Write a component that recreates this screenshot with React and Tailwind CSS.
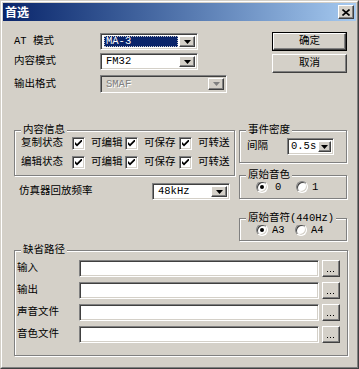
import React from "react";

const sunken =
  "border border-t-[#808080] border-l-[#808080] border-b-white border-r-white shadow-[inset_1px_1px_0_#404040,inset_-1px_-1px_0_#d4d0c8]";
const raised =
  "border border-t-white border-l-white border-b-[#404040] border-r-[#404040] shadow-[inset_-1px_-1px_0_#808080,inset_1px_1px_0_#d4d0c8]";
const etched =
  "relative border border-[#808080] shadow-[inset_1px_1px_0_#fff,1px_1px_0_#fff]";

function Arrow({ disabled }) {
  return (
    <svg width="7" height="4" viewBox="0 0 7 4">
      <polygon points="0,0 7,0 3.5,4" fill={disabled ? "#808080" : "#000"} />
    </svg>
  );
}

function Combo({ value, w, h, selected, disabled, tight, aw = "w-[16px]" }) {
  return (
    <div
      className={`${sunken} ${w} ${h} flex items-stretch p-[2px] ${
        disabled ? "bg-[#d4d0c8]" : "bg-white"
      }`}
    >
      <div className={`flex-1 flex items-center min-w-0 ${tight ? "" : "pl-[1px] pr-[1px]"}`}>
        {selected ? (
          <div className="h-full w-full bg-[#0a246a] text-white flex items-center pl-[1px] border border-dotted border-[#c8c8c8] leading-none">
            {value}
          </div>
        ) : disabled ? (
          <span className="pl-[2px] text-[#808080] [text-shadow:1px_1px_0_#fff] leading-none">
            {value}
          </span>
        ) : (
          <span className={`${tight ? "pl-[1px]" : "pl-[2px]"} leading-none whitespace-nowrap`}>{value}</span>
        )}
      </div>
      <div className={`${raised} ${aw} shrink-0 bg-[#d4d0c8] flex items-center justify-center`}>
        <Arrow disabled={disabled} />
      </div>
    </div>
  );
}

function Check() {
  return (
    <div className={`${sunken} w-[13px] h-[13px] bg-white flex items-center justify-center shrink-0`}>
      <svg width="7" height="7" viewBox="0 0 7 7">
        <path d="M0 2 L2 4 L7 -1 L7 1.5 L2 6.5 L0 4.5 Z" fill="#000" />
      </svg>
    </div>
  );
}

function Radio({ on }) {
  return (
    <div className="w-[12px] h-[12px] rounded-full bg-white border border-t-[#808080] border-l-[#808080] border-b-white border-r-white shadow-[inset_1px_1px_0_#404040,inset_-1px_-1px_0_#d4d0c8] flex items-center justify-center shrink-0">
      {on ? <div className="w-[4px] h-[4px] rounded-full bg-black" /> : null}
    </div>
  );
}

function Legend({ children }) {
  return (
    <span className="absolute -top-[8px] left-[6px] bg-[#d4d0c8] px-[2px] leading-[14px] whitespace-nowrap">
      {children}
    </span>
  );
}

function CheckItem({ label, w }) {
  return (
    <div className={`flex items-center ${w}`}>
      <Check />
      <span className="ml-[6px] leading-none whitespace-nowrap">{label}</span>
    </div>
  );
}

function PathRow({ label, first }) {
  return (
    <div className={`flex items-center h-[17px] ${first ? "" : "mt-[5px]"}`}>
      <span className="w-[62px] leading-none">{label}</span>
      <div className={`${sunken} w-[240px] h-[17px] bg-white`} />
      <div className={`${raised} ml-[3px] w-[18px] h-[17px] bg-[#d4d0c8] flex items-end justify-center pb-[3px]`}>
        <svg width="8" height="2" viewBox="0 0 8 2">
          <rect x="0" y="0" width="1" height="1" fill="#000" />
          <rect x="3" y="0" width="1" height="1" fill="#000" />
          <rect x="6" y="0" width="1" height="1" fill="#000" />
        </svg>
      </div>
    </div>
  );
}

export default function App() {
  return (
    <div className="w-[359px] h-[369px] bg-[#d4d0c8] text-black text-[10.5px] font-['Liberation_Mono','Noto_Sans_CJK_SC',monospace]">
      <div className="h-full border border-t-[#d4d0c8] border-l-[#d4d0c8] border-b-[#404040] border-r-[#404040]">
        <div className="h-full border border-t-white border-l-white border-b-[#808080] border-r-[#808080] p-[1px] flex flex-col">
          {/* Title bar */}
          <div className="h-[18px] shrink-0 flex items-center justify-between bg-gradient-to-r from-[#0a246a] to-[#a6caf0] pl-[2px] pr-[2px]">
            <span className="text-white font-bold text-[12px] leading-none font-['Noto_Sans_CJK_SC',sans-serif]">
              首选
            </span>
            <div className={`${raised} w-[16px] h-[14px] bg-[#d4d0c8] flex items-center justify-center`}>
              <svg width="8" height="7" viewBox="0 0 8 7">
                <path d="M0.5 0.5 L7.5 6.5 M7.5 0.5 L0.5 6.5" stroke="#000" strokeWidth="1.6" />
              </svg>
            </div>
          </div>

          {/* Body */}
          <div className="flex-1 pl-[11px] pt-[11px]">
            {/* Section A */}
            <div className="flex">
              <div className="w-[258px] pt-[1px]">
                <div className="flex items-center h-[17px]">
                  <span className="w-[86px] leading-none">AT 模式</span>
                  <Combo value="MA-3" w="w-[98px]" h="h-[17px]" selected />
                </div>
                <div className="flex items-center h-[17px] mt-[3px]">
                  <span className="w-[86px] leading-none">内容模式</span>
                  <Combo value="FM32" w="w-[98px]" h="h-[17px]" />
                </div>
                <div className="flex items-center h-[18px] mt-[5px]">
                  <span className="w-[86px] leading-none">输出格式</span>
                  <Combo value="SMAF" w="w-[127px]" h="h-[18px]" disabled />
                </div>
              </div>
              <div className="w-[75px]">
                <div className="border border-black">
                  <div className={`${raised} h-[17px] flex items-center justify-center leading-none`}>
                    确定
                  </div>
                </div>
                <div className={`${raised} mt-[3px] h-[19px] flex items-center justify-center leading-none`}>
                  取消
                </div>
              </div>
            </div>

            {/* Section B */}
            <div className="flex mt-[37px]">
              <div className="w-[221px]">
                <div className={`${etched} h-[46px] pt-[5px] pl-[6px]`}>
                  <Legend>内容信息</Legend>
                  <div className="flex items-center h-[14px]">
                    <span className="w-[51px] leading-none">复制状态</span>
                    <CheckItem label="可编辑" w="w-[53px]" />
                    <CheckItem label="可保存" w="w-[54px]" />
                    <CheckItem label="可转送" w="" />
                  </div>
                  <div className="flex items-center h-[14px] mt-[5px]">
                    <span className="w-[51px] leading-none">编辑状态</span>
                    <CheckItem label="可编辑" w="w-[53px]" />
                    <CheckItem label="可保存" w="w-[54px]" />
                    <CheckItem label="可转送" w="" />
                  </div>
                </div>
                <div className="flex items-center mt-[7px] h-[17px] pl-[5px]">
                  <span className="w-[133px] leading-none">仿真器回放频率</span>
                  <Combo value="48kHz" w="w-[78px]" h="h-[17px]" />
                </div>
              </div>

              <div className="w-[108px] ml-[4px]">
                <div className={`${etched} h-[33px] pt-[7px] pl-[7px]`}>
                  <Legend>事件密度</Legend>
                  <div className="flex items-center h-[17px]">
                    <span className="w-[40px] leading-none">间隔</span>
                    <Combo value="0.5s" w="w-[47px]" h="h-[17px]" aw="w-[13px]" tight />
                  </div>
                </div>
                <div className={`${etched} mt-[12px] h-[24px] pt-[5px] pl-[16px]`}>
                  <Legend>原始音色</Legend>
                  <div className="flex items-center h-[12px]">
                    <div className="flex items-center w-[40px]">
                      <Radio on />
                      <span className="ml-[7px] leading-none">0</span>
                    </div>
                    <div className="flex items-center">
                      <Radio />
                      <span className="ml-[4px] leading-none">1</span>
                    </div>
                  </div>
                </div>
                <div className={`${etched} mt-[19px] h-[23px] pt-[5px] pl-[16px]`}>
                  <Legend>原始音符(440Hz)</Legend>
                  <div className="flex items-center h-[12px]">
                    <div className="flex items-center w-[39px]">
                      <Radio on />
                      <span className="ml-[4px] leading-none">A3</span>
                    </div>
                    <div className="flex items-center">
                      <Radio />
                      <span className="ml-[4px] leading-none">A4</span>
                    </div>
                  </div>
                </div>
              </div>
            </div>

            {/* Section C */}
            <div className={`${etched} mt-[9px] w-[334px] h-[106px] pt-[9px] pl-[2px]`}>
              <Legend>缺省路径</Legend>
              <PathRow label="输入" first />
              <PathRow label="输出" />
              <PathRow label="声音文件" />
              <PathRow label="音色文件" />
            </div>
          </div>
        </div>
      </div>
    </div>
  );
}
